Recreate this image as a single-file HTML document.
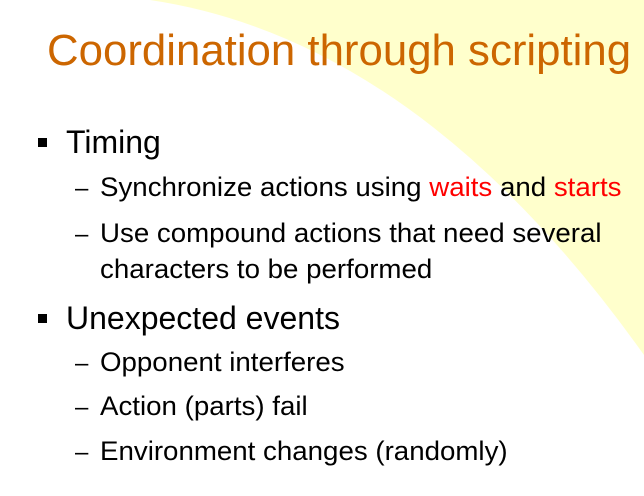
<!DOCTYPE html>
<html><head><meta charset="utf-8"><style>
html,body{margin:0;padding:0}
body{width:644px;height:496px;overflow:hidden;background:#fff;position:relative;font-family:"Liberation Sans",sans-serif;color:#000}
.t{position:absolute;white-space:nowrap;line-height:1;transform-origin:0 50%}
.title{color:#cc6600;font-size:44px;left:47px;top:29px;transform:scaleX(0.995)}
.l1{font-size:32px;left:66px}
.l2{font-size:27px;left:100px;transform:scaleX(1.025)}
.sq{position:absolute;width:9px;height:9px;background:#000;left:38px}
.d{position:absolute;font-size:24px;left:75px;line-height:1}
.r{color:#ff0000}
</style></head><body>
<svg width="644" height="496" style="position:absolute;left:0;top:0">
<path d="M150,0 Q420,40 644,355 L644,0 Z" fill="#ffffcc"/>
</svg>
<div class="t title">Coordination through scripting</div>
<div class="sq" style="top:138px"></div>
<div class="t l1" style="top:126px">Timing</div>
<div class="d" style="top:177px">–</div>
<div class="t l2" style="top:174px">Synchronize actions using <span class="r">waits</span> and <span class="r">starts</span></div>
<div class="d" style="top:223px">–</div>
<div class="t l2" style="top:220px">Use compound actions that need several</div>
<div class="t l2" style="top:256px">characters to be performed</div>
<div class="sq" style="top:314px"></div>
<div class="t l1" style="top:302px">Unexpected events</div>
<div class="d" style="top:352px">–</div>
<div class="t l2" style="top:349px">Opponent interferes</div>
<div class="d" style="top:396px">–</div>
<div class="t l2" style="top:393px">Action (parts) fail</div>
<div class="d" style="top:441px">–</div>
<div class="t l2" style="top:438px">Environment changes (randomly)</div>
</body></html>
